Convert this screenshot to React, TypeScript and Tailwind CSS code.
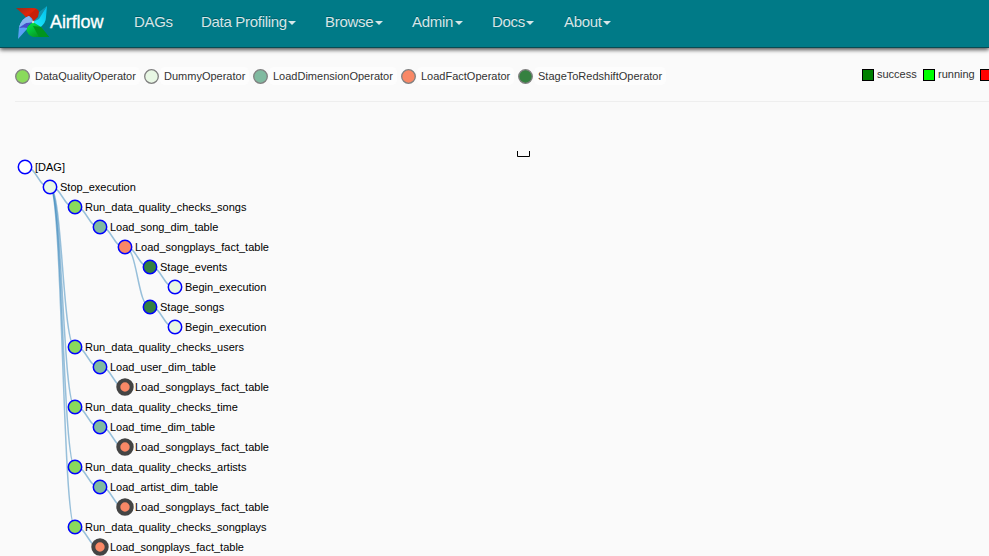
import React from "react";

type TreeNode = { label: string; depth: number; row: number; fill: string; collapsed?: boolean; parent: number };

const LIME = "#8ada5b";
const PALE = "#e8f7e4";
const SAGE = "#80baa0";
const CORAL = "#f98866";
const FOREST = "#358140";

const nodes: TreeNode[] = [
  { label: "[DAG]", depth: 0, row: 0, fill: "#fff", parent: -1 },
  { label: "Stop_execution", depth: 1, row: 1, fill: PALE, parent: 0 },
  { label: "Run_data_quality_checks_songs", depth: 2, row: 2, fill: LIME, parent: 1 },
  { label: "Load_song_dim_table", depth: 3, row: 3, fill: SAGE, parent: 2 },
  { label: "Load_songplays_fact_table", depth: 4, row: 4, fill: CORAL, parent: 3 },
  { label: "Stage_events", depth: 5, row: 5, fill: FOREST, parent: 4 },
  { label: "Begin_execution", depth: 6, row: 6, fill: PALE, parent: 5 },
  { label: "Stage_songs", depth: 5, row: 7, fill: FOREST, parent: 4 },
  { label: "Begin_execution", depth: 6, row: 8, fill: PALE, parent: 7 },
  { label: "Run_data_quality_checks_users", depth: 2, row: 9, fill: LIME, parent: 1 },
  { label: "Load_user_dim_table", depth: 3, row: 10, fill: SAGE, parent: 9 },
  { label: "Load_songplays_fact_table", depth: 4, row: 11, fill: CORAL, collapsed: true, parent: 10 },
  { label: "Run_data_quality_checks_time", depth: 2, row: 12, fill: LIME, parent: 1 },
  { label: "Load_time_dim_table", depth: 3, row: 13, fill: SAGE, parent: 12 },
  { label: "Load_songplays_fact_table", depth: 4, row: 14, fill: CORAL, collapsed: true, parent: 13 },
  { label: "Run_data_quality_checks_artists", depth: 2, row: 15, fill: LIME, parent: 1 },
  { label: "Load_artist_dim_table", depth: 3, row: 16, fill: SAGE, parent: 15 },
  { label: "Load_songplays_fact_table", depth: 4, row: 17, fill: CORAL, collapsed: true, parent: 16 },
  { label: "Run_data_quality_checks_songplays", depth: 2, row: 18, fill: LIME, parent: 1 },
  { label: "Load_songplays_fact_table", depth: 3, row: 19, fill: CORAL, collapsed: true, parent: 18 },
];

const px = (n: TreeNode) => 25 + n.depth * 25;
const py = (n: TreeNode) => 65 + n.row * 20;

function link(a: TreeNode, b: TreeNode) {
  const m = (px(a) + px(b)) / 2;
  return `M${px(a)},${py(a)}C${m},${py(a)} ${m},${py(b)} ${px(b)},${py(b)}`;
}

function Logo() {
  return (
    <svg width="34" height="34" viewBox="0 0 34 34" className="shrink-0">
      <defs>
        <linearGradient id="red" x1="0" y1="0" x2="1" y2="1">
          <stop offset="0" stopColor="#8c3020" />
          <stop offset=".45" stopColor="#e02408" />
          <stop offset="1" stopColor="#8e1c0c" />
        </linearGradient>
        <linearGradient id="cyan" x1="1" y1="0" x2="0" y2="1">
          <stop offset="0" stopColor="#00bdea" />
          <stop offset="1" stopColor="#22f0ff" />
        </linearGradient>
        <linearGradient id="green" x1="0" y1="0" x2="1" y2="1">
          <stop offset="0" stopColor="#00ee50" />
          <stop offset="1" stopColor="#087c14" />
        </linearGradient>
      </defs>
      <path d="M0 2H17Q22 2 23 6L22 11L17 16L12 14L8 9Z" fill="url(#red)" />
      <path d="M12 10L20 3Q23 5 23 9L17 16Z" fill="#c82009" />
      <path d="M31 0L30 11Q30 18 23 22L17 16L23 11Z" fill="url(#cyan)" />
      <path d="M31 0L23 6L22 11L17 16L23 13Z" fill="#1593ad" />
      <path d="M17 16L25 21L33 31H17Q11 29 10 22Z" fill="url(#green)" />
      <path d="M17 20L25 21L33 31H23Z" fill="#00951d" />
      <path d="M2 33L3 21Q6 12 13 10Q17 12 17 16Q10 18 11 23Z" fill="#58a0f5" />
      <path d="M17 16L10 17L3 22Q8 21 11 22Q12 18 17 16Z" fill="#4850c8" />
      <path d="M3 21Q6 12 13 10L17 16L10 17Z" fill="#86b4ee" />
      <circle cx="17" cy="16" r="1.2" fill="#d0ddd7" />
    </svg>
  );
}

function NavItem({ label, width, caret = true }: { label: string; width: string; caret?: boolean }) {
  return (
    <a className={`flex shrink-0 items-center whitespace-nowrap text-[15px] leading-5 tracking-[-0.3px] text-[#d5e6e8] [text-shadow:0_-1px_0_rgba(0,0,0,0.25)] ${width}`}>
      {label}
      {caret && <span className="mt-0.5 ml-[1.5px] h-0 w-0 border-x-4 border-t-4 border-x-transparent border-t-[#d5e6e8]" />}
    </a>
  );
}

function Operator({ label, fill, width }: { label: string; fill: string; width: string }) {
  return (
    <div className={`flex shrink-0 items-center ${width}`}>
      <svg width="15" height="15" className="shrink-0">
        <circle cx="7.5" cy="7.5" r="6.8" fill={fill} stroke="#808080" strokeWidth="1.3" />
      </svg>
      <span className="ml-px rounded-[5px] bg-[#fdfdfd] py-px pr-1 pl-1 text-[11px] leading-4 whitespace-nowrap text-[#333]">{label}</span>
    </div>
  );
}

function State({ label, color, width }: { label?: string; color: string; width: string }) {
  return (
    <div className={`flex h-[18px] shrink-0 items-start ${width}`}>
      <span className={`mt-[2px] mr-[3px] h-3 w-3 shrink-0 border border-black ${color}`} />
      {label && <span className="text-[11px] leading-[14px] text-[#333]">{label}</span>}
    </div>
  );
}

export default function App() {
  return (
    <div className="flex h-[556px] w-[989px] flex-col overflow-hidden bg-[#fafafa] font-['Liberation_Sans',Arial,sans-serif]">
      <nav className="relative flex h-12 shrink-0 items-start border-b border-[#084b53] bg-[#007a87] pt-[6px] pl-4 shadow-[0_2px_4px_rgba(0,0,0,0.65)]">
        <Logo />
        <div className="flex h-8 items-center">
          <span className="w-[84px] text-[18px] leading-5 tracking-[-0.1px] text-white [-webkit-text-stroke:0.3px_white]">Airflow</span>
          <NavItem label="DAGs" width="w-[67px]" caret={false} />
          <NavItem label="Data Profiling" width="w-[124px]" />
          <NavItem label="Browse" width="w-[87px]" />
          <NavItem label="Admin" width="w-[80px]" />
          <NavItem label="Docs" width="w-[72px]" />
          <NavItem label="About" width="w-[60px]" />
        </div>
      </nav>
      <div className="ml-[15px] flex h-[54px] shrink-0 items-start border-b border-[#eee] pt-[19px]">
        <Operator label="DataQualityOperator" fill={LIME} width="w-[129px]" />
        <Operator label="DummyOperator" fill={PALE} width="w-[109px]" />
        <Operator label="LoadDimensionOperator" fill={SAGE} width="w-[148px]" />
        <Operator label="LoadFactOperator" fill={CORAL} width="w-[117px]" />
        <Operator label="StageToRedshiftOperator" fill={FOREST} width="w-[344px]" />
        <State label="success" color="bg-[#008000]" width="w-[61px]" />
        <State label="running" color="bg-[#00ff00]" width="w-[57px]" />
        <State color="bg-[#ff0000]" width="w-[50px]" />
      </div>
      <svg width="989" height="454" className="shrink-0">
        <path d="M517.5 49V54.5H529.5V49" fill="none" stroke="#000" />
        {nodes.map((n, i) => n.parent >= 0 && <path key={i} d={link(nodes[n.parent], n)} fill="none" stroke="#1f77b4" strokeOpacity="0.45" strokeWidth="1.5" />)}
        {nodes.map((n, i) => (
          <g key={i}>
            <circle cx={px(n)} cy={py(n)} r="6.7" fill={n.fill} stroke={n.collapsed ? "#444" : "#00f"} strokeWidth={n.collapsed ? 4 : 1.5} />
            <text x={px(n) + 10} y={py(n) + 4} className="fill-black text-[11px]">{n.label}</text>
          </g>
        ))}
      </svg>
    </div>
  );
}
